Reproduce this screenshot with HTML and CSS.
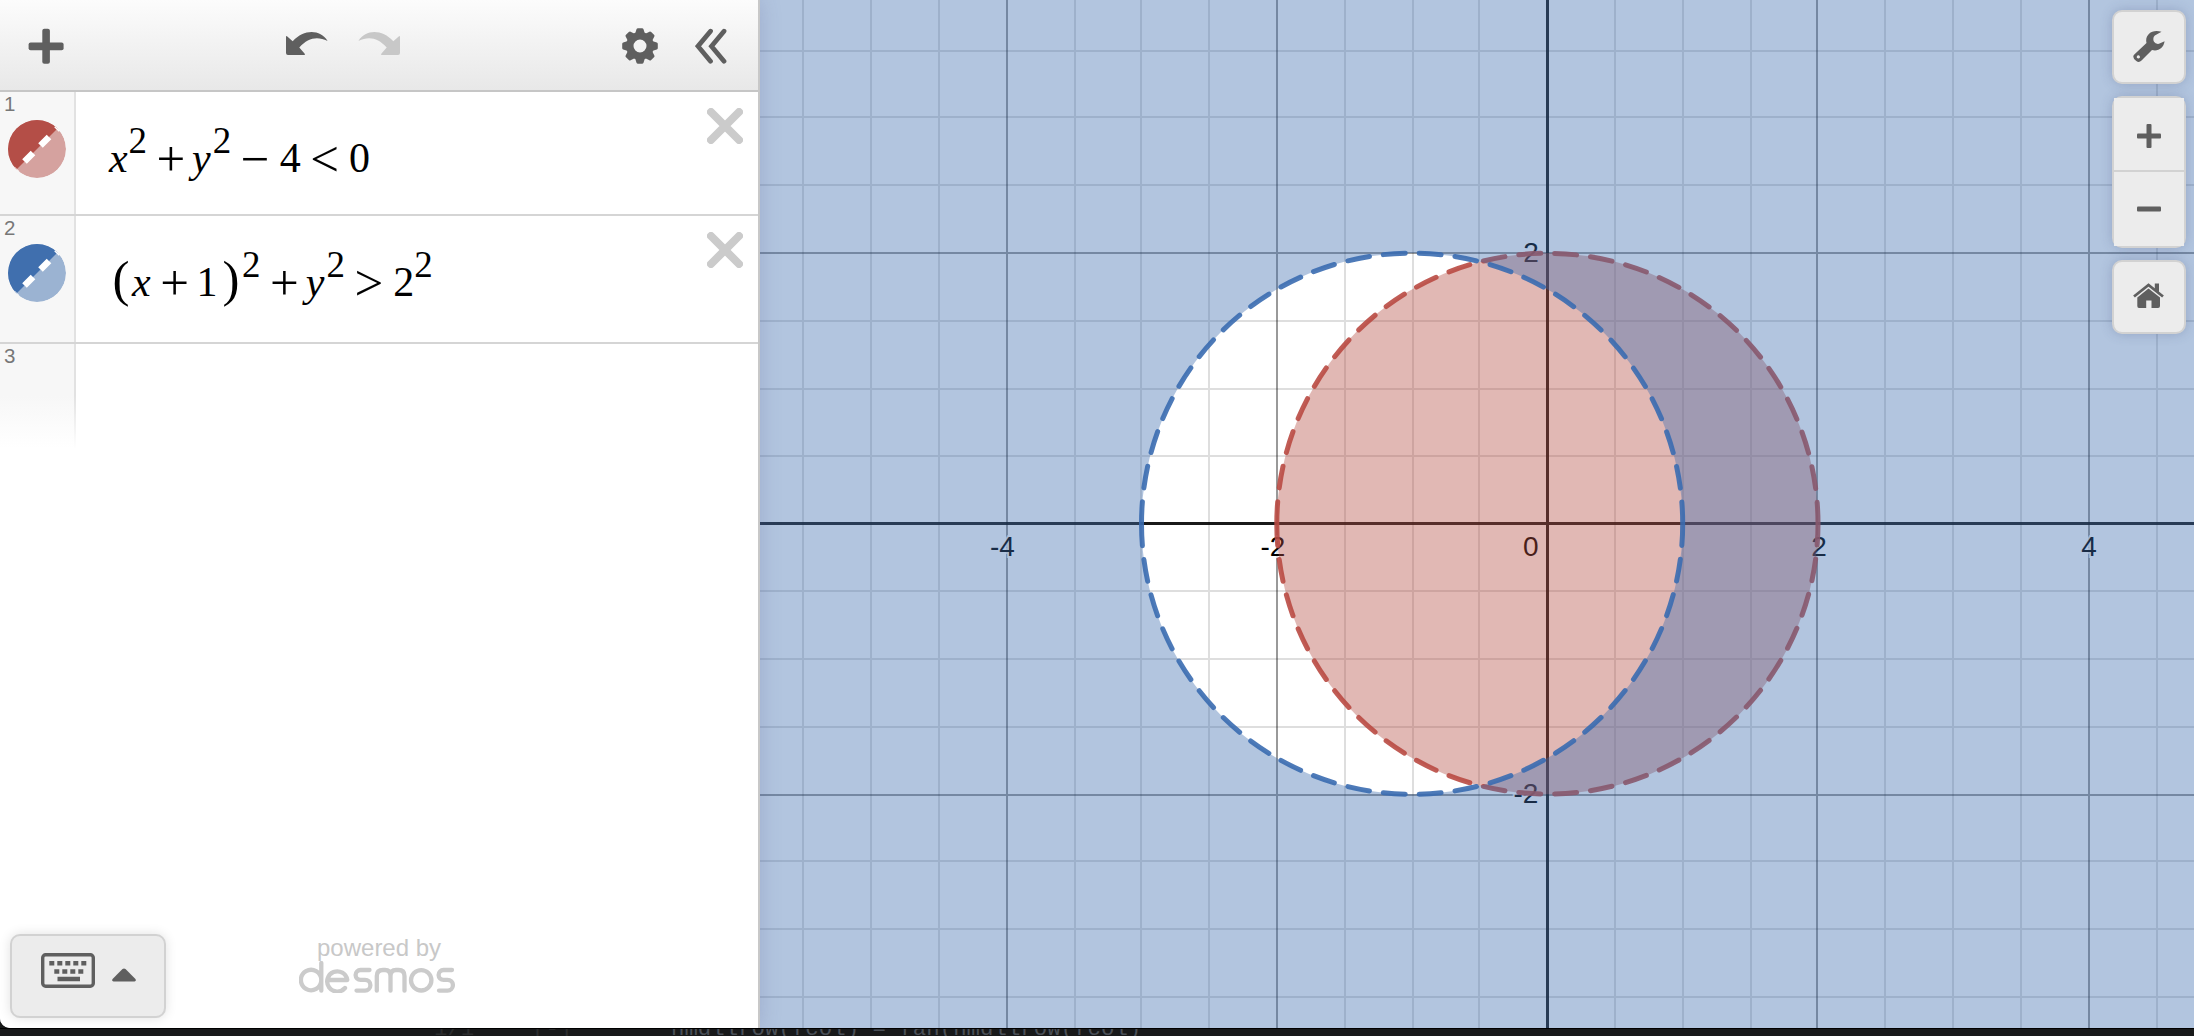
FILE: index.html
```
<!DOCTYPE html>
<html lang="en">
<head>
<meta charset="utf-8">
<title>Desmos | Graphing Calculator</title>
<link rel="stylesheet" href="styles.css">
</head>
<body>
<div class="app">
  <aside class="panel">
    <header class="toolbar">
      <svg class="ico add" viewBox="0 0 36 36" width="36" height="36"><rect x="14.300" y=".8" width="7.600" height="35" rx="2"/><rect x=".6" y="14.600" width="35" height="7.600" rx="2"/></svg>
      <svg class="ico undo" viewBox="0 0 42 24" width="42" height="24"><path d="M0 5 Q0 3.5 1.3 4.5L6.7 9.2C18-3 34-3 41.600 9C31 4 22 6 13.300 15.500L18.500 21.500Q19.500 23 18 23L2 23Q0 23 0 21Z"/></svg>
      <svg class="ico redo" viewBox="0 0 42 24" width="42" height="24"><path transform="matrix(-1 0 0 1 42 0)" d="M0 5 Q0 3.5 1.3 4.5L6.7 9.2C18-3 34-3 41.600 9C31 4 22 6 13.300 15.500L18.500 21.500Q19.500 23 18 23L2 23Q0 23 0 21Z"/></svg>
      <svg class="ico gear" viewBox="-18 -18 36 36" width="36" height="36">
        <circle r="10.200" fill="none" stroke="currentColor" stroke-width="7.400"/>
        <g id="teeth"><path id="tooth" d="M-5-12L-3.500-16.800Q-3.200-17.800-2-17.800H2Q3.200-17.800 3.500-16.800L5-12Z"/><use href="#tooth" transform="rotate(45)"/><use href="#tooth" transform="rotate(90)"/><use href="#tooth" transform="rotate(135)"/></g>
        <use href="#teeth" transform="rotate(180)"/>
      </svg>
      <svg class="ico hide" viewBox="0 0 32 36" width="32" height="36"><path d="M15.500 3.200L3 18.200L15.500 33.200M29 3.200L16.500 18.200L29 33.200" fill="none" stroke="currentColor" stroke-width="4.800" stroke-linecap="round"/></svg>
    </header>
    <ol class="list">
      <li class="row first">
        <div class="tab"><span class="num">1</span>
          <svg class="dot red" viewBox="0 0 58 58" width="58" height="58"><use href="#dot"/></svg>
        </div>
        <div class="math eq1"><i>x</i><sup>2</sup><b class="op plus">+</b><i class="y">y</i><sup class="after-y">2</sup><b class="op minus">−</b><span class="rhs">4</span><b class="op rel">&lt;</b><span class="rhs">0</span></div>
        <svg class="del" viewBox="0 0 36 36" width="36" height="36"><path d="M4 4L32 32M32 4L4 32"/></svg>
      </li>
      <li class="row second">
        <div class="tab"><span class="num">2</span>
          <svg class="dot blue" viewBox="0 0 58 58" width="58" height="58"><use href="#dot"/></svg>
        </div>
        <div class="math eq2"><b class="par">(</b><i class="in">x</i><b class="op plus">+</b><span class="one">1</span><b class="par close">)</b><sup class="after-par">2</sup><b class="op plus">+</b><i class="y">y</i><sup class="after-y">2</sup><b class="op rel">&gt;</b><span class="rhs">2</span><sup class="tight">2</sup></div>
        <svg class="del" viewBox="0 0 36 36" width="36" height="36"><path d="M4 4L32 32M32 4L4 32"/></svg>
      </li>
      <li class="row third"><div class="tab"><span class="num">3</span></div></li>
    </ol>
    <footer class="foot">
      <div class="keypad">
        <svg viewBox="0 0 54 36" width="54" height="36"><rect x="1.700" y="1.700" width="50.600" height="31.600" rx="3" fill="none" stroke="currentColor" stroke-width="3.400"/><path d="M8.300 10.300h5m3 0h5m3 0h5m3 0h5m3 0h5M13.300 18.500h5m3 0h5m3 0h5m3 0h5M16.500 26h22.500" fill="none" stroke="currentColor" stroke-width="4.600"/></svg>
        <svg class="caret" viewBox="0 0 24 14" width="24" height="14"><path d="M1.500 13.500Q-.8 13 .8 10.800L10.500 1Q12 0 13.500 1L23.200 10.800Q24.800 13 22.500 13.500Z"/></svg>
      </div>
      <div class="brand">
        <span>powered by</span>
        <svg viewBox="0 0 156 32" width="156" height="32" role="img" aria-label="desmos"><path d="M22.300 2V29.700M22.300 19A10.200 10.200 0 1 0 22.300 19.100M29.500 19H48.300A10.100 10.100 0 1 0 46 27M70.500 9H61.500A4.800 4.800 0 0 0 61.500 18.800H66A5.400 5.400 0 0 1 66 29.600H57.500M77.800 29.700V15Q77.800 9 84 9H86Q91.500 9 91.500 15V29.700M91.500 15Q91.500 9 97 9H99.500Q105.500 9 105.500 15V29.700M112 19.300A10.200 10.200 0 1 1 132.400 19.300A10.200 10.200 0 1 1 112 19.300M153 9H144.500A4.800 4.800 0 0 0 144.500 18.800H148.500A5.400 5.400 0 0 1 148.500 29.600H140" fill="none" stroke="#cbcbcb" stroke-width="4.300" stroke-linecap="round" stroke-linejoin="round"/></svg>
      </div>
    </footer>
  </aside>
  <main class="graph">
    <svg class="plot" viewBox="760 0 1434 1028" width="1434" height="1028">
      <path class="minor" d="M803 0V1028M871 0V1028M939 0V1028M1075 0V1028M1141 0V1028M1209 0V1028M1345 0V1028M1413 0V1028M1479 0V1028M1615 0V1028M1683 0V1028M1751 0V1028M1885 0V1028M1953 0V1028M2021 0V1028M2157 0V1028M760 51H2194M760 117H2194M760 185H2194M760 321H2194M760 389H2194M760 456H2194M760 591H2194M760 659H2194M760 727H2194M760 861H2194M760 929H2194M760 997H2194"/>
      <path class="major" d="M1007 0V1028M1277 0V1028M1817 0V1028M2089 0V1028M760 253H2194M760 795H2194"/>
      <path class="axis" d="M1547.500 0V1028M760 523.500H2194"/>
      <g class="labels">
        <text x="1002.500" y="556">-4</text><text x="1273" y="556">-2</text><text x="1819" y="556">2</text><text x="2089" y="556">4</text>
        <text x="1530.800" y="556">0</text><text x="1531" y="262">2</text><text x="1526" y="803">-2</text>
      </g>
      <circle cx="1547.400" cy="523.700" r="270.600" fill="#b44e44" fill-opacity=".4"/>
      <path class="curve" stroke="#b94a43" d="M1276.800 523.700A270.600 270.600 0 0 1 1818 523.700M1276.800 523.700A270.600 270.600 0 0 0 1818 523.700"/>
      <path fill="#3f6eaf" fill-opacity=".4" fill-rule="evenodd" d="M760 0H2194V1028H760ZM1141.500 523.700A270.600 270.600 0 0 0 1682.700 523.700A270.600 270.600 0 0 0 1141.500 523.700Z"/>
      <path class="curve" stroke="#3a6cb0" d="M1141.500 523.700A270.600 270.600 0 0 1 1682.700 523.700M1141.500 523.700A270.600 270.600 0 0 0 1682.700 523.700"/>
    </svg>
    <nav class="tools">
      <div class="btn"><svg viewBox="0 0 32 32" width="32" height="32"><path fill-rule="evenodd" d="M1.300 24.500L13.500 13C11.500 5 19 -1.500 28.500 1.800L21.800 5.500Q19.300 8 21 11.800Q22.500 14.300 26 13.800L31.600 11.300C30.500 18.500 25 21.500 19 20L8.500 30.500Q6 33 3.300 31Q-1.500 27.500 1.300 24.500ZM5.300 25.300a1.600 1.600 0 1 0 .1 0Z"/></svg></div>
      <div class="group">
        <div class="cell zoom-in"><svg viewBox="0 0 24 24" width="24" height="24"><rect x="9.500" width="5" height="24" rx="1"/><rect y="9.500" width="24" height="5" rx="1"/></svg></div>
        <div class="cell"><svg viewBox="0 0 24 24" width="24" height="24"><rect y="9.500" width="24" height="5" rx="1"/></svg></div>
      </div>
      <div class="btn"><svg viewBox="0 0 32 26" width="32" height="26"><path d="M1 13.500L15.500 2L30 13.500" fill="none" stroke="currentColor" stroke-width="2.800"/><path d="M21.800.5H26V9.500L21.800 6ZM15.500 5.500L27 14.500V23Q27 25 25 25H18.500V17.500H13.200V25H6Q4.300 25 4.300 23V14.500Z"/></svg></div>
    </nav>
  </main>
</div>
<div class="behind"><span class="faint">1/1</span><span class="faint fold">[-]</span><span>nmdllrow(fcol) = fan(nmdllrow(fcol)</span></div>
<svg width="0" height="0" class="defs">
  <defs>
    <clipPath id="c"><circle cx="29" cy="29" r="29"/></clipPath>
    <g id="dot" clip-path="url(#c)"><circle cx="29" cy="29" r="29" fill="currentColor" fill-opacity=".5"/><path d="M-10 68L68-10H-10Z" fill="currentColor"/><path d="M16.500 41.500L25 33M32.500 25.500L41 17M48.500 9.500L56 2M9 49L1 57" stroke="#fff" stroke-width="6.500"/></g>
  </defs>
</svg>
</body>
</html>
```
FILE: styles.css
```
* { box-sizing: border-box; }
body { margin: 0; height: 1036px; overflow: hidden; background: #18191a; font-family: "Liberation Sans", Arial, sans-serif; }
svg { display: block; fill: currentColor; }
.defs { position: absolute; }
.app { display: flex; height: 1028px; background: #fff; border-bottom-left-radius: 10px; overflow: hidden; }
.panel { width: 760px; display: flex; flex-direction: column; border-right: 2px solid #c8c8c8; box-shadow: 0 0 20px rgba(80, 80, 140, .22); z-index: 1; background: #fff; }
.toolbar { height: 92px; display: flex; align-items: flex-start; padding: 28px 0 0 28px; border-bottom: 2px solid #c6c6c6; background: linear-gradient(#fcfcfc, #e8e8e8); color: #5f5f5f; }
.undo { margin: 4px 0 0 222px; }
.redo { margin: 4px 0 0 30px; color: #c8c8c8; }
.gear { margin-left: 221.500px; }
.hide { margin-left: 37.500px; }
.list { list-style: none; margin: 0; padding: 0; flex: 1; }
.row { display: flex; border-bottom: 2px solid #d5d5d5; }
.first { height: 124px; }
.second { height: 128px; }
.third { height: 104px; border: 0; }
.tab { width: 76px; border-right: 2px solid #e2e2e2; background: #f7f7f7; flex: none; }
.third .tab { background: linear-gradient(#f7f7f7 50%, #fff); border-image: linear-gradient(#e2e2e2 50%, #fff) 1; }
.num { display: block; height: 28px; padding: 1px 0 0 4px; font-size: 20.500px; line-height: 22px; color: #777; }
.dot { margin-left: 8px; }
.red { color: #b44e47; }
.blue { color: #406fae; }
.math { flex: 1; padding-left: 33px; font: 42px/48px "Liberation Serif", "Times New Roman", serif; white-space: nowrap; height: 80px; margin-top: 42px; color: #000; }
.eq2 { padding-left: 36.500px; }
.math sup { font-size: 37px; line-height: 0; vertical-align: 18.700px; margin-left: .8px; }
.math b { font-weight: 400; line-height: 0; }
.math .op { font-size: 51px; margin-left: 9.500px; vertical-align: -4px; }
.math .y { margin-left: 6.800px; }
.math .after-y { margin-left: 2.200px; }
.math .rhs { margin-left: 10px; }
.math .in { margin-left: 2.500px; }
.math .one { margin-left: 7.700px; }
.math .par { font-size: 51px; }
.math .close { margin-left: 4.800px; }
.math .after-par { margin-left: 2.700px; }
.math .tight { margin-left: 0; }
.del { margin: 16px 15px 0 0; stroke: #cbcbcb; stroke-width: 8; stroke-linecap: round; }
.foot { height: 96px; display: flex; }
.keypad { display: flex; width: 156px; height: 84px; margin: 2px 0 0 10px; padding: 17px 0 0 29px; border: 2px solid #d2d2d2; border-radius: 10px; background: #ececec; box-shadow: 0 0 12px rgba(0, 0, 0, .12); color: #5f5f5f; }
.caret { margin: 15px 0 0 17px; }
.brand { margin-left: 133px; padding-top: 2.500px; color: #c8c8c8; font-size: 24px; line-height: 26px; }
.brand span { display: block; padding-left: 18px; }
.graph { position: relative; width: 1434px; }
.minor, .major, .axis { fill: none; stroke: #000; stroke-width: 2; stroke-opacity: .13; }
.major { stroke-opacity: .4; }
.axis { stroke-width: 3; stroke-opacity: .9; }
.labels { font-size: 28px; text-anchor: middle; fill: #000; stroke: #fff; stroke-opacity: .8; stroke-width: 4px; paint-order: stroke; }
.curve { fill: none; stroke-width: 5; stroke-opacity: .9; stroke-linecap: round; stroke-dasharray: 22 14; }
.tools { position: absolute; top: 10px; right: 8px; display: flex; flex-direction: column; gap: 12px; color: #5f5f5f; }
.btn, .group { width: 74px; border: 2px solid #d2d2d2; border-radius: 10px; background: #ececec; box-shadow: 0 0 12px rgba(60, 70, 120, .25); }
.btn, .cell { display: flex; justify-content: center; align-items: center; }
.btn { height: 74px; padding-bottom: 2px; }
.group { height: 152px; background: #d2d2d2; display: grid; grid-template-rows: 72px 74px; gap: 2px; }
.cell { background: #ececec; }
.zoom-in { padding-top: 3px; }
.behind { display: flex; height: 8px; border-top: 1px solid #000; overflow: hidden; padding-left: 434px; color: #4a4f57; font: 22.400px/30px "Liberation Mono", monospace; white-space: pre; }
.behind span { flex: none; margin-top: -15px; }
.behind .faint { width: 98px; color: #2b2c2d; }
.behind .fold { width: 139px; }
```
